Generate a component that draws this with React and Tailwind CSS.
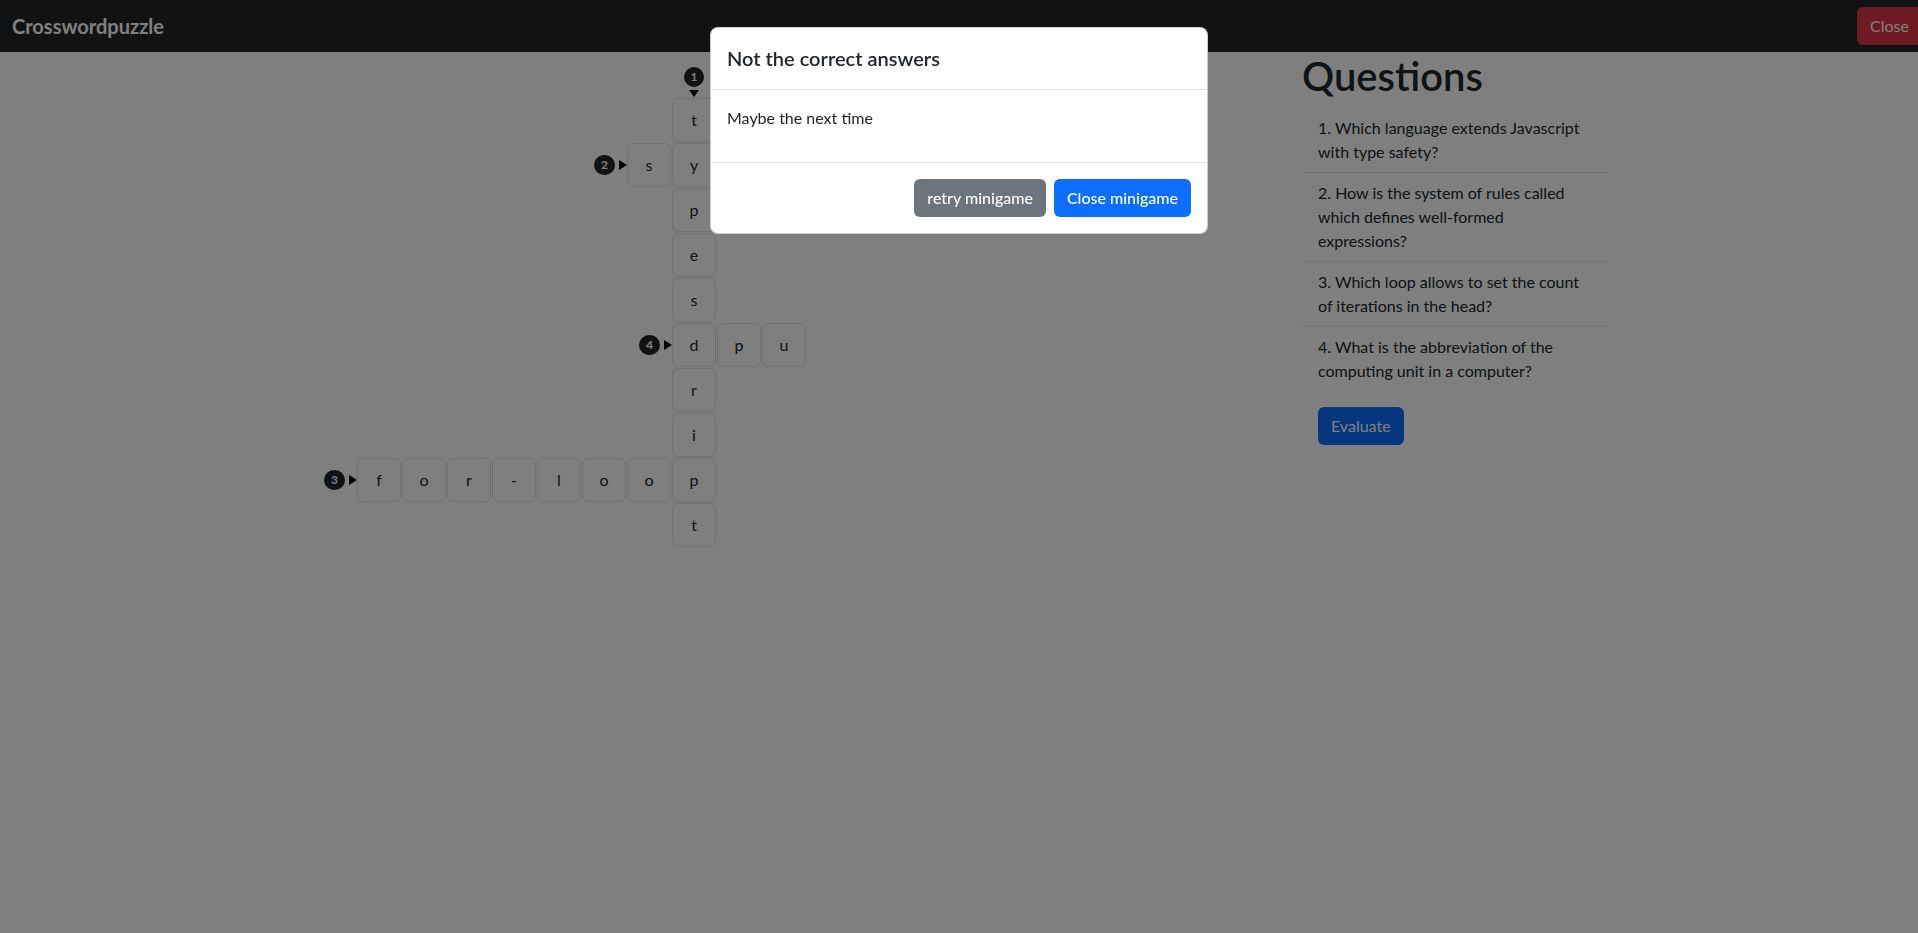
const colStart = ["col-start-1", "col-start-2", "col-start-3", "col-start-4", "col-start-5", "col-start-6", "col-start-7", "col-start-8", "col-start-9", "col-start-10"];
const rowStart = ["row-start-1", "row-start-2", "row-start-3", "row-start-4", "row-start-5", "row-start-6", "row-start-7", "row-start-8", "row-start-9", "row-start-10"];

// row, col, letter, clue marker
const cells = [
    [0, 7, "t", { n: 1, dir: "down" }],
    [1, 6, "s", { n: 2, dir: "across" }],
    [1, 7, "y"],
    [2, 7, "p"],
    [3, 7, "e"],
    [4, 7, "s"],
    [5, 7, "d", { n: 4, dir: "across" }],
    [5, 8, "p"],
    [5, 9, "u"],
    [6, 7, "r"],
    [7, 7, "i"],
    [8, 0, "f", { n: 3, dir: "across" }],
    [8, 1, "o"],
    [8, 2, "r"],
    [8, 3, "-"],
    [8, 4, "l"],
    [8, 5, "o"],
    [8, 6, "o"],
    [8, 7, "p"],
    [9, 7, "t"],
];

const questions = [
    "1. Which language extends Javascript with type safety?",
    "2. How is the system of rules called which defines well-formed expressions?",
    "3. Which loop allows to set the count of iterations in the head?",
    "4. What is the abbreviation of the computing unit in a computer?",
];

function Badge({ n }) {
    return (
        <span className="rounded-full bg-[#212529] text-white text-[12px] font-bold leading-none px-[7px] py-[4px]">{n}</span>
    );
}

function Marker({ clue }) {
    if (clue.dir === "down") {
        return (
            <div className="absolute bottom-full left-0 right-0 mb-[2px] flex flex-col items-center gap-[3px]">
                <Badge n={clue.n} />
                <span className="w-0 h-0 border-x-[5px] border-x-transparent border-t-[7px] border-t-black"></span>
            </div>
        );
    }
    return (
        <div className="absolute right-full top-0 bottom-0 mr-px flex items-center gap-[4px]">
            <Badge n={clue.n} />
            <span className="w-0 h-0 border-y-[5px] border-y-transparent border-l-[8px] border-l-black"></span>
        </div>
    );
}

export default function App() {
    return (
        <div className="relative min-h-screen bg-white text-[#212529]" style={{ fontFamily: "Lato, sans-serif" }}>
            <nav className="h-[52px] bg-[#212529] flex items-center pl-3 overflow-hidden">
                <span className="text-white text-[20px] font-bold">Crosswordpuzzle</span>
                <button className="ml-auto -mr-[4px] shrink-0 h-[38px] px-[13px] bg-[#dc3545] text-white text-[16px] rounded-[6px]">Close</button>
            </nav>

            <div className="flex">
                <div className="w-[1302px] pl-[357px] pt-[46px]">
                    <div className="grid grid-cols-[repeat(10,44px)] grid-rows-[repeat(10,44px)] gap-px">
                        {cells.map(([r, c, letter, clue]) => (
                            <div
                                key={r + "-" + c}
                                className={`${rowStart[r]} ${colStart[c]} relative flex items-center justify-center border border-[#dee2e6] rounded-[6px] bg-white text-[16px]`}
                            >
                                {letter}
                                {clue && <Marker clue={clue} />}
                            </div>
                        ))}
                    </div>
                </div>

                <div className="w-[306px]">
                    <h1 className="text-[40px] font-semibold leading-[1.2] mb-2">Questions</h1>
                    <ul>
                        {questions.map((q, i) => (
                            <li key={i} className={`px-4 py-2 text-[16px] leading-6 ${i < questions.length - 1 ? "border-b border-[#dee2e6]" : ""}`}>
                                {q}
                            </li>
                        ))}
                    </ul>
                    <button className="ml-4 mt-4 h-[38px] px-[13px] bg-[#0d6efd] text-white text-[16px] rounded-[6px]">Evaluate</button>
                </div>
            </div>

            <div className="fixed inset-0 bg-black/50 flex justify-center items-start pt-[27px]">
                <div className="w-[498px] bg-white rounded-[8px] border border-black/20">
                    <div className="px-4 py-4 border-b border-[#dee2e6]">
                        <h5 className="text-[20px] font-semibold leading-[29px]">Not the correct answers</h5>
                    </div>
                    <div className="p-4">
                        <p className="mb-4 text-[16px] leading-6">Maybe the next time</p>
                    </div>
                    <div className="p-4 border-t border-[#dee2e6] flex justify-end gap-2">
                        <button className="h-[38px] px-[13px] bg-[#6c757d] text-white text-[16px] font-medium rounded-[6px]">retry minigame</button>
                        <button className="h-[38px] px-[13px] bg-[#0d6efd] text-white text-[16px] font-medium rounded-[6px]">Close minigame</button>
                    </div>
                </div>
            </div>
        </div>
    );
}
